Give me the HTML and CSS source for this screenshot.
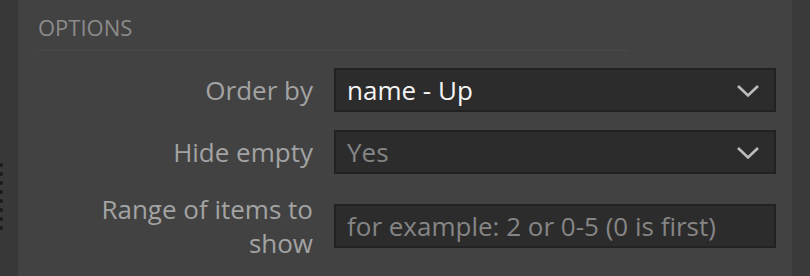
FILE: index.html
```html
<!DOCTYPE html>
<html lang="en">
<head>
  <meta charset="UTF-8">
  <meta name="viewport" content="width=device-width, initial-scale=1.0">
  <title>Options</title>
  <link rel="stylesheet" href="styles.css">
</head>
<body>
  <div class="layout">
    <div class="side-strip side-left">
      <div class="grip">
        <span></span><span></span><span></span><span></span>
        <span></span><span></span><span></span><span></span>
      </div>
    </div>

    <div class="panel">
      <h2 class="section-title">OPTIONS</h2>

      <div class="form">
        <label class="form-label" for="orderBy">Order by</label>
        <div class="select">
          <span class="select-value">name - Up</span>
          <svg class="chevron" viewBox="0 0 24 14" width="24" height="14">
            <path d="M2 2 L12 11.5 L22 2" fill="none" stroke="currentColor" stroke-width="2.6"/>
          </svg>
        </div>

        <label class="form-label" for="hideEmpty">Hide empty</label>
        <div class="select">
          <span class="select-value muted">Yes</span>
          <svg class="chevron" viewBox="0 0 24 14" width="24" height="14">
            <path d="M2 2 L12 11.5 L22 2" fill="none" stroke="currentColor" stroke-width="2.6"/>
          </svg>
        </div>

        <label class="form-label" for="range">Range of items to show</label>
        <input class="text-input" id="range" type="text" placeholder="for example: 2 or 0-5 (0 is first)">
      </div>
    </div>

    <div class="side-strip side-right"></div>
  </div>
</body>
</html>
```

FILE: styles.css
```css
:root {
  --panel-bg: #424242;
  --strip-bg: #383838;
  --strip-right: #3a3a3a;
  --field-bg: #2c2c2c;
  --field-border: #222222;
  --label-color: #a3a3a3;
  --title-color: #8b8b8b;
  --value-color: #f4f4f4;
  --muted-color: #858585;
  --chevron-color: #bdbdbd;
}

* {
  box-sizing: border-box;
  margin: 0;
  padding: 0;
}

body {
  font-family: 'Open Sans', 'Noto Sans', sans-serif;
  background: var(--panel-bg);
  width: 810px;
  height: 276px;
  overflow: hidden;
}

.layout {
  display: flex;
  height: 276px;
}

.side-strip {
  width: 18px;
  flex-shrink: 0;
  background: var(--strip-bg);
}

.side-right {
  background: var(--strip-right);
}

.grip {
  display: flex;
  flex-direction: column;
  gap: 5px;
  padding-top: 163px;
  margin-left: -1px;
}

.grip span {
  width: 4px;
  height: 4px;
  border-radius: 50%;
  background: #1c1c1c;
}

.panel {
  flex: 1;
  padding: 12px 16px 0 20px;
}

.section-title {
  width: 590px;
  font-size: 22px;
  font-weight: 400;
  line-height: 30px;
  color: var(--title-color);
  padding-bottom: 8px;
  border-bottom: 1px solid #4a4a4a;
  margin-bottom: 17px;
}

.form {
  display: grid;
  grid-template-columns: 275px 1fr;
  column-gap: 21px;
  row-gap: 18px;
  align-items: center;
}

.form-label {
  font-size: 26px;
  line-height: 34px;
  color: var(--label-color);
  text-align: right;
}

.select,
.text-input {
  height: 44px;
  background: var(--field-bg);
  border: 2px solid var(--field-border);
}

.select {
  display: flex;
  align-items: center;
  justify-content: space-between;
  padding: 0 14px 0 11px;
}

.select-value {
  font-size: 26px;
  color: var(--value-color);
}

.select-value.muted {
  color: var(--muted-color);
}

.chevron {
  color: var(--chevron-color);
  margin-top: 1px;
}

.text-input {
  width: 100%;
  padding: 0 11px;
  font-family: inherit;
  font-size: 26px;
  color: var(--value-color);
  outline: none;
}

.text-input::placeholder {
  color: var(--muted-color);
}
```
